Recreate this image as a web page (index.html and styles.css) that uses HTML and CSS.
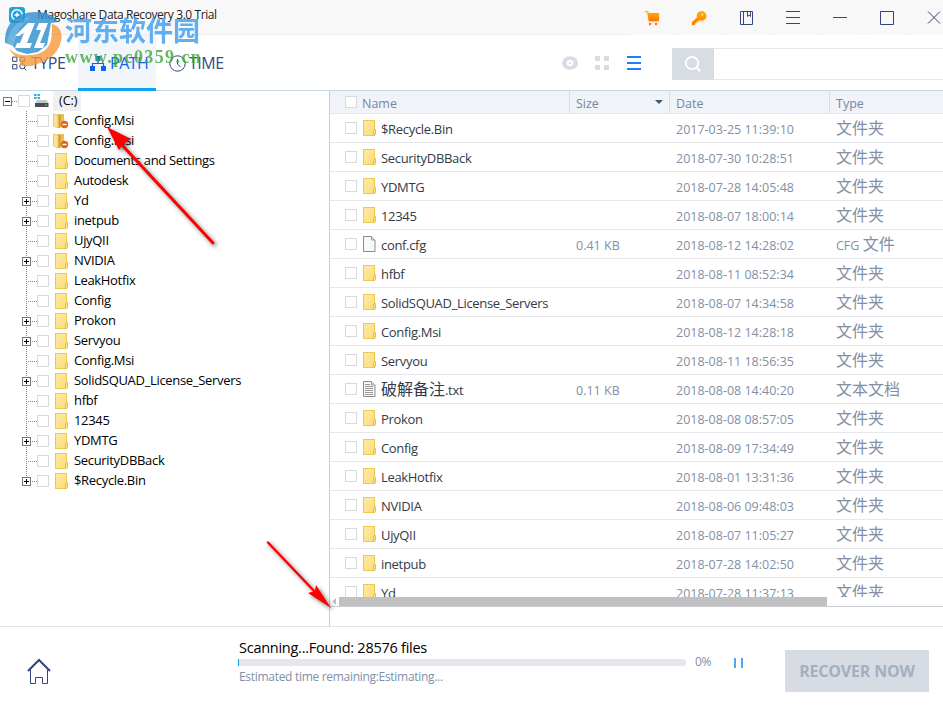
FILE: index.html
```html
<!DOCTYPE html>
<html lang="en">
<head>
    <meta charset="UTF-8">
    <meta name="viewport" content="width=device-width, initial-scale=1.0">
    <title>Magoshare Data Recovery 3.0 Trial</title>
    <link rel="stylesheet" href="styles.css">
</head>
<body>
    <!-- Shared icons -->
    <svg class="sprite" width="0" height="0">
        <defs>
            <linearGradient id="folderFill" x1="0" y1="0" x2="1" y2="1">
                <stop offset="0" stop-color="#ffeaa6"/>
                <stop offset="1" stop-color="#fbdc78"/>
            </linearGradient>
            <linearGradient id="orange" x1="0" y1="0" x2="0" y2="1">
                <stop offset="0" stop-color="#ffb400"/>
                <stop offset="1" stop-color="#ff7300"/>
            </linearGradient>
            <symbol id="folder" viewBox="0 0 13 16">
                <rect x="0.5" y="0.5" width="11" height="15" fill="url(#folderFill)" stroke="#edca4e"/>
                <path d="M10.5 15.5v-5l1-1h1v5l-1 1z" fill="#fbe08a" stroke="#e3bb3c" stroke-width="0.9"/>
            </symbol>
            <symbol id="folder-deleted" viewBox="0 0 16 16">
                <path d="M4 1h7v9l-4 5H4z" fill="#e9bf5c"/>
                <path d="M0.5 1l4.5 1.5v12.5l-4.5-2z" fill="#fbe497" stroke="#dcb048" stroke-width="0.6"/>
                <path d="M6 2h1.5v12L6 15z" fill="#c9973a"/>
                <circle cx="11.5" cy="11.5" r="3.7" fill="#e8630c"/>
                <rect x="9.5" y="10.8" width="4" height="1.4" fill="#fff"/>
            </symbol>
            <symbol id="file" viewBox="0 0 13 16">
                <path d="M0.5 0.5h8l3.5 3.5v11.5H0.5z" fill="#f8f9f9" stroke="#8b8b8b"/>
                <path d="M8.5 0.5v3.5h3.5" fill="#ddd" stroke="#8b8b8b" stroke-width="0.8"/>
            </symbol>
            <symbol id="textfile" viewBox="0 0 13 16">
                <path d="M0.5 0.5h8l3.5 3.5v11.5H0.5z" fill="#f8f9f9" stroke="#8b8b8b"/>
                <path d="M8.5 0.5v3.5h3.5" fill="#ddd" stroke="#8b8b8b" stroke-width="0.8"/>
                <path d="M2 3.5h5M2 5.5h8M2 7.5h8M2 9.5h8M2 11.5h8M2 13.5h8" stroke="#999"/>
            </symbol>
        </defs>
    </svg>

    <div class="app">
        <header class="titlebar">
            <svg class="app-icon" width="16" height="16" viewBox="0 0 16 16">
                <rect width="16" height="16" rx="3" fill="#1fa3dc"/>
                <circle cx="8" cy="8" r="5.3" fill="none" stroke="#fff" stroke-width="1.5"/>
                <path d="M8 5.5v5M5.5 8h5" stroke="#fff" stroke-width="1.4"/>
            </svg>
            <h1 class="app-title">Magoshare Data Recovery 3.0 Trial</h1>
            <div class="window-buttons">
                <button class="window-btn">
                    <svg class="glow" width="16" height="16" viewBox="0 0 16 16"><path d="M1 1h3.1l.5 2H15v7.5l-1 .8H4.700L3.2 2H1z" fill="url(#orange)"/><path d="M5 13h2v2H5zM11 13h2v2h-2z" fill="#ff7300"/></svg>
                </button>
                <button class="window-btn">
                    <svg class="glow" width="16" height="16" viewBox="0 0 16 16"><path d="M10.3 1a4.8 4.8 0 1 1-1.9 9.1L6.6 11.8H5.3v1.5H3.7V15H1v-2.7l5.1-5A4.8 4.8 0 0 1 10.3 1z" fill="url(#orange)"/><circle cx="11.3" cy="4.8" r="1.1" fill="#ffe9b0"/></svg>
                </button>
                <button class="window-btn">
                    <svg width="16" height="16" viewBox="0 0 16 16"><path d="M2.5 1.5h12v13h-12zM5.5 1.5v13M9.5 1.5v5l1.7-1.4 1.3 1.4v-5" class="line"/></svg>
                </button>
                <button class="window-btn">
                    <svg width="16" height="16" viewBox="0 0 16 16"><path d="M1 1.5h14M1 7.5h14M1 13.5h14" class="line"/></svg>
                </button>
                <button class="window-btn">
                    <svg width="16" height="16" viewBox="0 0 16 16"><path d="M1 7.5h14" class="line"/></svg>
                </button>
                <button class="window-btn">
                    <svg width="16" height="16" viewBox="0 0 16 16"><path d="M1.5 1.5h13v13h-13z" class="line"/></svg>
                </button>
                <button class="window-btn">
                    <svg width="16" height="16" viewBox="0 0 16 16"><path d="M2 1.5l12 12M14 1.5L2 13.5" class="line"/></svg>
                </button>
            </div>
        </header>

        <div class="toolbar">
            <nav class="tabs">
                <a class="tab tab-type">
                    <svg width="15" height="15" viewBox="0 0 15 15"><path d="M.6 1.1h4.3v4.3H.6zM8.1 1.1h4.3v4.3H8.1zM.6 8.6h4.3v4.3H.6z" class="line"/><circle cx="10.3" cy="10.2" r="2.6" class="line"/><path d="M12 12l2.4 2.4" class="line"/></svg>
                    <span>TYPE</span>
                </a>
                <a class="tab tab-path active">
                    <svg width="16" height="15" viewBox="0 0 16 15"><path d="M5.5 0h5v5h-5zM0 10h5v5H0zM11 10h5v5h-5z" fill="#0b62f5"/><path d="M8 5v2.5M2.5 10V7.5h11V10" fill="none" stroke="#0b62f5" stroke-width="1.2"/></svg>
                    <span>PATH</span>
                </a>
                <a class="tab tab-time">
                    <svg width="17" height="17" viewBox="0 0 17 17"><circle cx="8.5" cy="8.5" r="7.7" class="line"/><path d="M8.5 4v5l3 3" class="line"/></svg>
                    <span>TIME</span>
                </a>
            </nav>
            <div class="views">
                <svg width="16" height="14" viewBox="0 0 16 14"><ellipse cx="8" cy="7" rx="8" ry="6.8" fill="#d8dde4"/><circle cx="8" cy="7" r="3.3" fill="#fff"/><circle cx="8" cy="7" r="1.2" fill="#d8dde4"/></svg>
                <svg width="14" height="14" viewBox="0 0 14 14"><path d="M0 0h5v5H0zM9 0h5v5H9zM0 9h5v5H0zM9 9h5v5H9z" fill="#d8dde4"/></svg>
                <svg class="view-list" width="14" height="14" viewBox="0 0 14 14"><path d="M0 0h14v2H0zM0 6h14v2H0zM0 12h14v2H0z" fill="#1a80ff"/></svg>
            </div>
            <div class="search">
                <button class="search-btn">
                    <svg width="18" height="18" viewBox="0 0 18 18"><circle cx="8" cy="8" r="6.2" fill="none" stroke="#fff" stroke-width="1.8"/><path d="M12.3 12.3l4 4" stroke="#fff" stroke-width="2"/></svg>
                </button>
                <div class="search-input"></div>
            </div>
        </div>

        <main class="content">
            <aside class="sidebar">
                <div class="tree-root">
                    <span class="toggle minus"></span>
                    <span class="dots"></span>
                    <span class="checkbox"></span>
                    <svg class="drive" width="16" height="14" viewBox="0 0 16 14"><path d="M0 0h2.5v2H0zM3.5 0H6v2H3.5zM0 3h2.5v2H0zM3.5 3H6v2H3.5z" fill="#1eb6ee"/><path d="M3 6h9.5l2 3H1.5z" fill="#c4c8ca"/><rect x="1" y="9" width="13.5" height="4" fill="#4a4e50"/><rect x="11" y="10.5" width="2" height="1" fill="#53e04b"/></svg>
                    <span class="root-label">(C:)</span>
                </div>
                <ul class="tree">
                    <li><i class="toggle none"></i><i class="checkbox"></i><svg class="deleted"><use href="#folder-deleted"/></svg><span>Config.Msi</span></li>
                    <li><i class="toggle none"></i><i class="checkbox"></i><svg class="deleted"><use href="#folder-deleted"/></svg><span>Config.Msi</span></li>
                    <li><i class="toggle none"></i><i class="checkbox"></i><svg class="icon"><use href="#folder"/></svg><span>Documents and Settings</span></li>
                    <li><i class="toggle none"></i><i class="checkbox"></i><svg class="icon"><use href="#folder"/></svg><span>Autodesk</span></li>
                    <li><i class="toggle plus"></i><i class="checkbox"></i><svg class="icon"><use href="#folder"/></svg><span>Yd</span></li>
                    <li><i class="toggle plus"></i><i class="checkbox"></i><svg class="icon"><use href="#folder"/></svg><span>inetpub</span></li>
                    <li><i class="toggle none"></i><i class="checkbox"></i><svg class="icon"><use href="#folder"/></svg><span>UjyQII</span></li>
                    <li><i class="toggle plus"></i><i class="checkbox"></i><svg class="icon"><use href="#folder"/></svg><span>NVIDIA</span></li>
                    <li><i class="toggle none"></i><i class="checkbox"></i><svg class="icon"><use href="#folder"/></svg><span>LeakHotfix</span></li>
                    <li><i class="toggle none"></i><i class="checkbox"></i><svg class="icon"><use href="#folder"/></svg><span>Config</span></li>
                    <li><i class="toggle plus"></i><i class="checkbox"></i><svg class="icon"><use href="#folder"/></svg><span>Prokon</span></li>
                    <li><i class="toggle plus"></i><i class="checkbox"></i><svg class="icon"><use href="#folder"/></svg><span>Servyou</span></li>
                    <li><i class="toggle none"></i><i class="checkbox"></i><svg class="icon"><use href="#folder"/></svg><span>Config.Msi</span></li>
                    <li><i class="toggle plus"></i><i class="checkbox"></i><svg class="icon"><use href="#folder"/></svg><span>SolidSQUAD_License_Servers</span></li>
                    <li><i class="toggle none"></i><i class="checkbox"></i><svg class="icon"><use href="#folder"/></svg><span>hfbf</span></li>
                    <li><i class="toggle none"></i><i class="checkbox"></i><svg class="icon"><use href="#folder"/></svg><span>12345</span></li>
                    <li><i class="toggle plus"></i><i class="checkbox"></i><svg class="icon"><use href="#folder"/></svg><span>YDMTG</span></li>
                    <li><i class="toggle none"></i><i class="checkbox"></i><svg class="icon"><use href="#folder"/></svg><span>SecurityDBBack</span></li>
                    <li><i class="toggle plus"></i><i class="checkbox"></i><svg class="icon"><use href="#folder"/></svg><span>$Recycle.Bin</span></li>
                </ul>
            </aside>

            <section class="files">
                <div class="file-head">
                    <div class="col name"><i class="checkbox"></i><span>Name</span></div>
                    <div class="col size"><span>Size</span><i class="sort"></i></div>
                    <div class="col date">Date</div>
                    <div class="col type">Type</div>
                </div>
                <div class="file-list">
                    <div class="row"><div class="name"><i class="checkbox"></i><svg class="icon"><use href="#folder"/></svg><span>$Recycle.Bin</span></div><div class="size"></div><div class="date">2017-03-25 11:39:10</div><div class="type"><b>文件夹</b></div></div>
                    <div class="row"><div class="name"><i class="checkbox"></i><svg class="icon"><use href="#folder"/></svg><span>SecurityDBBack</span></div><div class="size"></div><div class="date">2018-07-30 10:28:51</div><div class="type"><b>文件夹</b></div></div>
                    <div class="row"><div class="name"><i class="checkbox"></i><svg class="icon"><use href="#folder"/></svg><span>YDMTG</span></div><div class="size"></div><div class="date">2018-07-28 14:05:48</div><div class="type"><b>文件夹</b></div></div>
                    <div class="row"><div class="name"><i class="checkbox"></i><svg class="icon"><use href="#folder"/></svg><span>12345</span></div><div class="size"></div><div class="date">2018-08-07 18:00:14</div><div class="type"><b>文件夹</b></div></div>
                    <div class="row"><div class="name"><i class="checkbox"></i><svg class="icon"><use href="#file"/></svg><span>conf.cfg</span></div><div class="size">0.41 KB</div><div class="date">2018-08-12 14:28:02</div><div class="type">CFG <b>文件</b></div></div>
                    <div class="row"><div class="name"><i class="checkbox"></i><svg class="icon"><use href="#folder"/></svg><span>hfbf</span></div><div class="size"></div><div class="date">2018-08-11 08:52:34</div><div class="type"><b>文件夹</b></div></div>
                    <div class="row"><div class="name"><i class="checkbox"></i><svg class="icon"><use href="#folder"/></svg><span>SolidSQUAD_License_Servers</span></div><div class="size"></div><div class="date">2018-08-07 14:34:58</div><div class="type"><b>文件夹</b></div></div>
                    <div class="row"><div class="name"><i class="checkbox"></i><svg class="icon"><use href="#folder"/></svg><span>Config.Msi</span></div><div class="size"></div><div class="date">2018-08-12 14:28:18</div><div class="type"><b>文件夹</b></div></div>
                    <div class="row"><div class="name"><i class="checkbox"></i><svg class="icon"><use href="#folder"/></svg><span>Servyou</span></div><div class="size"></div><div class="date">2018-08-11 18:56:35</div><div class="type"><b>文件夹</b></div></div>
                    <div class="row"><div class="name"><i class="checkbox"></i><svg class="icon"><use href="#textfile"/></svg><span><b>破解备注</b>.txt</span></div><div class="size">0.11 KB</div><div class="date">2018-08-08 14:40:20</div><div class="type"><b>文本文档</b></div></div>
                    <div class="row"><div class="name"><i class="checkbox"></i><svg class="icon"><use href="#folder"/></svg><span>Prokon</span></div><div class="size"></div><div class="date">2018-08-08 08:57:05</div><div class="type"><b>文件夹</b></div></div>
                    <div class="row"><div class="name"><i class="checkbox"></i><svg class="icon"><use href="#folder"/></svg><span>Config</span></div><div class="size"></div><div class="date">2018-08-09 17:34:49</div><div class="type"><b>文件夹</b></div></div>
                    <div class="row"><div class="name"><i class="checkbox"></i><svg class="icon"><use href="#folder"/></svg><span>LeakHotfix</span></div><div class="size"></div><div class="date">2018-08-01 13:31:36</div><div class="type"><b>文件夹</b></div></div>
                    <div class="row"><div class="name"><i class="checkbox"></i><svg class="icon"><use href="#folder"/></svg><span>NVIDIA</span></div><div class="size"></div><div class="date">2018-08-06 09:48:03</div><div class="type"><b>文件夹</b></div></div>
                    <div class="row"><div class="name"><i class="checkbox"></i><svg class="icon"><use href="#folder"/></svg><span>UjyQII</span></div><div class="size"></div><div class="date">2018-08-07 11:05:27</div><div class="type"><b>文件夹</b></div></div>
                    <div class="row"><div class="name"><i class="checkbox"></i><svg class="icon"><use href="#folder"/></svg><span>inetpub</span></div><div class="size"></div><div class="date">2018-07-28 14:02:50</div><div class="type"><b>文件夹</b></div></div>
                    <div class="row"><div class="name"><i class="checkbox"></i><svg class="icon"><use href="#folder"/></svg><span>Yd</span></div><div class="size"></div><div class="date">2018-07-28 11:37:13</div><div class="type"><b>文件夹</b></div></div>
                </div>
                <div class="scrollbar">
                    <i class="scroll-left"></i>
                    <div class="thumb"></div>
                </div>
            </section>
        </main>

        <footer class="footer">
            <svg class="home" width="26" height="28" viewBox="0 0 26 28"><path d="M2 13L13 2l11 11" fill="none" stroke="#33457f" stroke-width="2"/><path d="M4.5 12v13.5h5v-6h7v6h5V12" class="line"/></svg>
            <div class="progress">
                <p class="scanning">Scanning...Found: 28576 files</p>
                <div class="bar"><div class="fill"></div></div>
                <p class="remaining">Estimated time remaining:Estimating...</p>
            </div>
            <span class="percent">0%</span>
            <div class="pause"></div>
            <button class="recover">RECOVER NOW</button>
        </footer>
    </div>

    <div class="watermark">
        <svg class="mark" width="58" height="58" viewBox="0 0 58 58">
            <path d="M48 13c8 2 11 9 9 17-3 14-15 22-32 25V44c12 0 20-6 22-15 1-6 1-11 1-16z" fill="#f59a3c"/>
            <path d="M5 37c5 6 12 8 20 7h4v11H16v-8c-5-1-9-5-11-10z" fill="#f59a3c"/>
            <path d="M1 32C0 12 14 1 31 1c11 0 19 3 23 10l-7 1-4 22-9 7-11 2-10-3-5-6z" fill="#2b8fce"/>
            <path d="M3 32C5 19 13 9 27 5L15 18 9 35z" fill="#4ba3da"/>
            <path d="M11 25L24 12h7l-8 20h5l-2 5H11l2-5h3l4-10-5 3zM35 12h9l-8 20h5l-2 5h-9l7-18h-5z" fill="#fff"/>
        </svg>
        <div class="mark-text">
            <span class="mark-name">河东软件园</span>
            <span class="mark-url">www.pc0359.cn</span>
        </div>
    </div>

    <svg class="arrows" width="943" height="706" viewBox="0 0 943 706">
        <path d="M213 243L122 145" stroke="#f00" stroke-width="3" stroke-linecap="round"/>
        <path d="M107 127l24 12-8 5-4 6z" fill="#f00"/>
        <path d="M268 542.5L316 593" stroke="#f00" stroke-width="2.5" stroke-linecap="round"/>
        <path d="M331 608l-15-23-1 6-7 2z" fill="#f00"/>
    </svg>
</body>
</html>
```
FILE: styles.css
```css
* {
    margin: 0;
    padding: 0;
    box-sizing: border-box;
}

body {
    font-family: "Open Sans", "Noto Sans", "Noto Sans CJK SC", sans-serif;
    font-size: 13px;
    background: #fff;
    overflow: hidden;
}

button {
    border: none;
    font-family: inherit;
}

svg {
    display: block;
    flex-shrink: 0;
}

.sprite {
    position: absolute;
}

.line {
    fill: none;
    stroke: #33457f;
    stroke-width: 1;
}

.app {
    width: 943px;
    height: 706px;
    display: flex;
    flex-direction: column;
    overflow: hidden;
}

/* Title bar */
.titlebar {
    height: 35px;
    display: flex;
    background: #f8f8f8;
    border-bottom: 1px solid #eee;
}

.app-icon {
    margin: 7px 0 0 9px;
}

.app-title {
    flex: 1;
    margin-left: 12px;
    font-size: 12px;
    font-weight: 400;
    line-height: 30px;
    letter-spacing: -0.41px;
    color: #222;
}

.window-buttons {
    display: flex;
    gap: 2px;
    width: 313px;
    height: 35px;
    overflow: hidden;
}

.window-btn {
    flex: none;
    display: flex;
    align-items: flex-start;
    width: 45px;
    height: 35px;
    padding: 10px 0 0 14px;
    background: #f8f8f8;
}

.glow {
    filter: drop-shadow(0 1px 1px rgba(255, 130, 0, 0.3));
}

/* Toolbar */
.toolbar {
    height: 56px;
    display: flex;
    align-items: center;
    border-bottom: 1px solid #c8d6e2;
}

.tabs {
    display: flex;
    flex: 1;
    align-self: stretch;
}

.tab {
    height: 56px;
    display: flex;
    align-items: center;
    font-size: 16px;
    letter-spacing: -0.5px;
    color: #3a4a80;
}

.tab-type {
    width: 78px;
    padding-left: 12px;
    gap: 4px;
}

.tab-path {
    width: 78px;
    padding: 3px 0 0 12px;
    gap: 4px;
}

.tab-time {
    padding-left: 13px;
    gap: 3px;
}

.tab.active {
    color: #0b62f5;
    background: #f2f6fa;
    border-bottom: 3px solid #0ba5f0;
}

.views {
    display: flex;
    align-items: center;
    gap: 17px;
    margin-right: 31px;
}

.view-list {
    margin-left: 1px;
}

.search {
    display: flex;
    width: 271px;
    height: 32px;
    margin-top: 2px;
}

.search-btn {
    width: 42px;
    padding-left: 12px;
    background: #d8dde4;
}

.search-input {
    flex: 1;
    border-top: 1px solid #e6e8eb;
    border-bottom: 1px solid #e6e8eb;
}

/* Main area */
.content {
    flex: 1;
    display: flex;
    min-height: 0;
}

.checkbox {
    flex: none;
    width: 12px;
    height: 12px;
    background: #fff;
    border: 1px solid #d9d9d9;
}

.icon {
    width: 13px;
    height: 16px;
}

/* Folder tree */
.sidebar {
    width: 330px;
    border-right: 1px solid #c9cdd2;
}

.tree-root {
    height: 20px;
    display: flex;
    align-items: center;
    padding-left: 3px;
}

.dots {
    width: 6px;
    height: 1px;
    background: repeating-linear-gradient(90deg, #888 0 1px, transparent 1px 2px);
}

.drive {
    margin-left: 4px;
}

.root-label {
    height: 20px;
    margin-left: 3px;
    padding: 0 3px 0 6px;
    line-height: 20px;
    font-size: 12.5px;
    background: #f0f0f0;
}

.tree {
    list-style: none;
}

.tree li {
    height: 20px;
    display: flex;
    align-items: center;
    padding-left: 22px;
    background-image:
        repeating-linear-gradient(#888 0 1px, transparent 1px 2px),
        repeating-linear-gradient(90deg, #888 0 1px, transparent 1px 2px);
    background-size: 1px 20px, 11px 1px;
    background-position: 26px 0, 26px 10px;
    background-repeat: no-repeat;
}

.tree li:last-child {
    background-size: 1px 10px, 11px 1px;
}

.tree li span {
    line-height: 18px;
    padding-bottom: 2px;
    letter-spacing: -0.32px;
    color: #000;
}

.toggle {
    flex: none;
    width: 9px;
    height: 9px;
    border: 1px solid #777;
    background:
        linear-gradient(#000, #000) center / 5px 1px no-repeat,
        #fff;
}

.toggle.plus {
    background:
        linear-gradient(#000, #000) center / 5px 1px no-repeat,
        linear-gradient(#000, #000) center / 1px 5px no-repeat,
        #fff;
}

.toggle.none {
    visibility: hidden;
}

.tree .checkbox {
    margin-left: 6px;
}

.tree .icon {
    margin: 0 6px 0 6px;
}

.deleted {
    width: 16px;
    height: 16px;
    margin: 0 5px 0 4px;
}

/* File list */
.files {
    flex: 1;
    display: flex;
    flex-direction: column;
    min-width: 0;
    height: 516px;
    border-bottom: 1px solid #c9cdd2;
}

.file-head {
    height: 23px;
    display: flex;
    background: #f0f4f9;
    border-bottom: 1px solid #e6e8eb;
    color: #7586a0;
    line-height: 25px;
}

.name {
    width: 240px;
    display: flex;
    padding-left: 15px;
}

.size {
    width: 100px;
    padding-left: 6px;
}

.date {
    width: 160px;
    padding-left: 6px;
}

.type {
    flex: 1;
    padding-left: 6px;
    white-space: nowrap;
}

.col {
    font-size: 12.5px;
    border-right: 1px solid #d5dde6;
}

.col.name .checkbox {
    margin: 5px 5px 0 0;
}

.col.size {
    display: flex;
    justify-content: space-between;
}

.col.type {
    border-right: none;
}

.sort {
    margin: 9px 6px 0 0;
    width: 8px;
    height: 4px;
    background: #3f5676;
    clip-path: polygon(0 0, 100% 0, 50% 100%);
}

.file-list {
    flex: 1;
    overflow: hidden;
}

.row {
    height: 29px;
    display: flex;
    border-bottom: 1px solid #e6e8eb;
    font-size: 12.5px;
    line-height: 31px;
    color: #8290a6;
}

.row .name {
    font-size: 13px;
    line-height: 30px;
    letter-spacing: -0.32px;
    color: #333a48;
}

.row b {
    font-weight: 400;
    font-size: 16px;
    line-height: 26px;
    letter-spacing: 0;
}

.row .checkbox {
    margin: 8px 6px 0 0;
}

.row .icon {
    margin: 6px 5px 0 0;
}

.scrollbar {
    height: 9px;
    display: flex;
    align-items: center;
}

.scroll-left {
    width: 4px;
    height: 7px;
    margin: 0 3px 0 2px;
    background: #bfbfbf;
    clip-path: polygon(100% 0, 100% 100%, 0 50%);
}

.thumb {
    width: 488px;
    height: 9px;
    background: #c1c1c1;
}

/* Footer */
.footer {
    height: 80px;
    display: flex;
    border-top: 1px solid #e2e4e8;
}

.home {
    margin: 31px 0 0 26px;
}

.progress {
    width: 448px;
    margin-left: 186px;
}

.scanning {
    padding-left: 1px;
    font-size: 14.5px;
    line-height: 20px;
    margin-top: 11px;
    letter-spacing: -0.26px;
    color: #000;
}

.bar {
    height: 7px;
    margin-top: 1px;
    background: #e6e7ec;
    border-radius: 3px;
}

.fill {
    width: 1px;
    height: 7px;
    background: #0ba5f0;
}

.remaining {
    padding-left: 1px;
    font-size: 12px;
    line-height: 22px;
    letter-spacing: -0.3px;
    color: #8190a6;
}

.percent {
    width: 39px;
    padding-left: 9px;
    font-size: 12px;
    line-height: 70px;
    letter-spacing: -0.3px;
    color: #8190a6;
}

.pause {
    width: 9px;
    height: 10px;
    margin: 31px 0 0 9px;
    border-left: 2px solid #52a5fa;
    border-right: 2px solid #52a5fa;
}

.recover {
    width: 144px;
    height: 42px;
    margin: 23px 0 0 42px;
    background: #d7dce4;
    color: #a4afbf;
    font-size: 16px;
    font-weight: 700;
    letter-spacing: -0.2px;
    white-space: nowrap;
}

/* Overlays */
.watermark {
    position: absolute;
    left: 4px;
    top: 11px;
    display: flex;
    opacity: 0.8;
}

.mark-text {
    display: flex;
    flex-direction: column;
    margin-left: 3px;
}

.mark-name {
    font-family: "Noto Sans CJK SC", sans-serif;
    font-size: 27px;
    font-weight: 700;
    line-height: 38px;
    color: #3b9df0;
}

.mark-url {
    font-family: "Liberation Serif", serif;
    font-size: 18px;
    font-weight: 700;
    line-height: 16px;
    letter-spacing: 1.4px;
    color: #43a53d;
}

.arrows {
    position: absolute;
    left: 0;
    top: 0;
    filter: drop-shadow(2px 2px 2px rgba(0, 0, 0, 0.55));
}
```
